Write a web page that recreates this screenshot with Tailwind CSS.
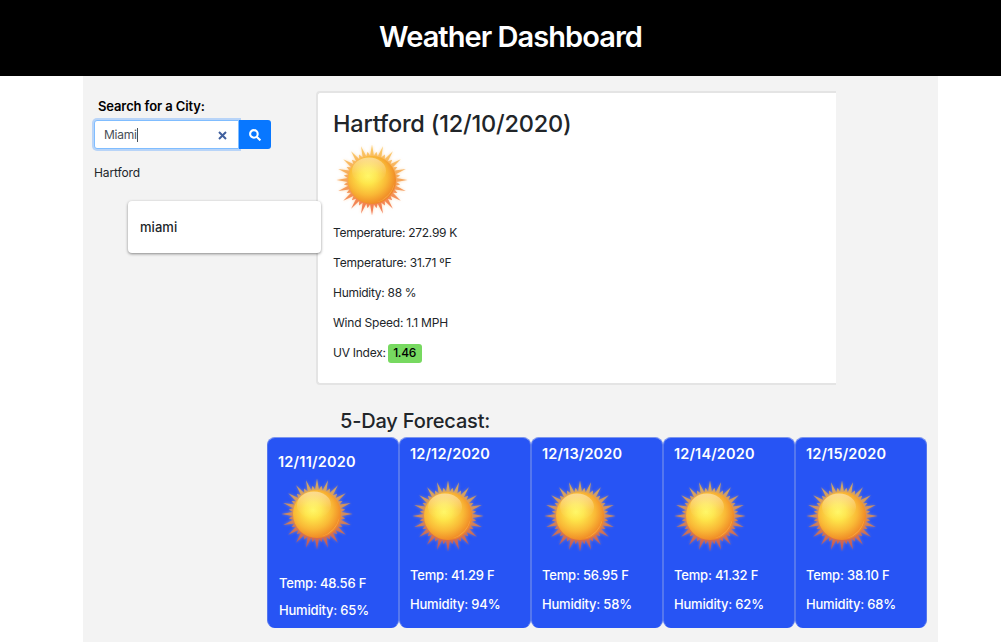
<!DOCTYPE html>
<html lang="en">
<head>
<meta charset="utf-8">
<title>Weather Dashboard</title>
<script src="https://cdn.jsdelivr.net/npm/@tailwindcss/browser@4"></script>
</head>
<body class="h-[642px] overflow-hidden bg-white font-['Inter',sans-serif] text-[12px] tracking-[-0.26px] text-[#212529]">
<svg class="absolute size-0" aria-hidden="true">
  <defs>
    <linearGradient id="rayFill" gradientUnits="userSpaceOnUse" x1="0" y1="-34" x2="0" y2="34">
      <stop offset="0" stop-color="#fbc040"/><stop offset=".5" stop-color="#f3923a"/><stop offset="1" stop-color="#ee5028"/>
    </linearGradient>
    <radialGradient id="disc" gradientUnits="userSpaceOnUse" cx="-4" cy="-4" r="32">
      <stop offset="0" stop-color="#fff65e"/><stop offset=".25" stop-color="#fee64a"/><stop offset=".6" stop-color="#f9b936"/><stop offset=".88" stop-color="#f08a26"/><stop offset="1" stop-color="#ee8228"/>
    </radialGradient>
    <linearGradient id="gloss" x1="0" y1="0" x2="0" y2="1">
      <stop offset="0" stop-color="#fff" stop-opacity=".45"/><stop offset=".6" stop-color="#fff" stop-opacity=".08"/><stop offset="1" stop-color="#fff" stop-opacity="0"/>
    </linearGradient>
    <filter id="glow" x="-20%" y="-20%" width="140%" height="140%"><feGaussianBlur stdDeviation="1.5"/></filter>
    <symbol id="sun" viewBox="-38 -38 76 76">
      <path class="rays" fill="#f8b257" opacity=".5" filter="url(#glow)"/>
      <path class="rays" fill="url(#rayFill)" opacity=".75"/>
      <circle r="24" fill="url(#disc)"/>
      <path d="M4 22.500A23 23 0 0 0 22.500 3 28 28 0 0 1 4 22.500Z" fill="#ffc069" opacity=".45"/>
      <ellipse cx="-3" cy="-9" rx="17" ry="13.500" fill="url(#gloss)"/>
    </symbol>
  </defs>
</svg>
<script>
  const points = [];
  for (let i = 0; i < 80; i++) {
    const radius = i % 4 === 0 ? 35.5 : i % 4 === 2 ? 28.5 : 24.5;
    const angle = (i * 4.5 - 90) * Math.PI / 180;
    points.push((radius * Math.cos(angle)).toFixed(2) + ' ' + (radius * Math.sin(angle)).toFixed(2));
  }
  document.querySelectorAll('.rays').forEach(p => p.setAttribute('d', 'M' + points.join('L') + 'Z'));
</script>
<header class="h-[76px] bg-black pt-[15px] pl-5 text-center text-white">
  <h1 class="text-[29px] leading-[43px] font-semibold tracking-[-0.95px]">Weather Dashboard</h1>
</header>
<main class="ml-[83px] h-[566px] w-[855px] bg-[#f3f3f3] pt-4">
  <div class="flex">
    <aside class="w-[233px] pl-[11px]">
      <label for="city" class="mt-1 block pl-1 text-[13px] leading-5 font-semibold tracking-[-0.12px] text-black">Search for a City:</label>
      <div class="mt-1 flex h-[29px]">
        <div id="city" class="flex w-[145px] items-center justify-between rounded-l-[3px] border border-[#80bdff] bg-white pr-[11px] pl-[9px] text-[#495057] shadow-[0_0_0_2px_#b8d4f8]">
          <span class="border-r border-[#495057] leading-[14px]">Miami</span>
          <svg class="mt-0.5 size-[9px]" viewBox="0 0 9 9" stroke="#41609e" stroke-width="2"><path d="M1 1 8 8M8 1 1 8"/></svg>
        </div>
        <button class="flex w-[31.500px] items-center justify-center rounded-r-[3px] bg-[#0877ff]" aria-label="Search">
          <svg class="size-3" viewBox="0 0 12 12" fill="none" stroke="#fff" stroke-width="2.100"><circle cx="4.900" cy="4.900" r="3.800"/><path d="m7.700 7.700 3.700 3.700"/></svg>
        </button>
      </div>
      <p class="mt-3.5 leading-5 tracking-[-0.12px]">Hartford</p>
    </aside>
    <section class="-mt-px h-[294px] w-[520px] rounded-l-[4px] border-2 border-r-0 border-[#e4e4e4] bg-white pl-[15px]">
      <h2 class="mt-[15px] text-[23.500px] leading-[32px] font-medium tracking-[-0.21px]">Hartford (12/10/2020)</h2>
      <svg class="mt-[2px] ml-px size-[76px]"><use href="#sun"/></svg>
      <div class="mt-[5px] flex flex-col gap-2.5 leading-5">
        <p class="tracking-[-0.29px]">Temperature: 272.99 K</p>
        <p class="tracking-[-0.18px]">Temperature: 31.71 ºF</p>
        <p class="tracking-[-0.29px]">Humidity: 88 %</p>
        <p class="tracking-[-0.2px]">Wind Speed: 1.1 MPH</p>
        <p class="flex items-center">UV Index:<b class="ml-[2px] h-[19px] w-[34px] rounded-[3px] bg-[#77d960] text-center leading-[18px] font-medium text-black">1.46</b></p>
      </div>
    </section>
  </div>
  <h3 class="mt-[21px] ml-[257px] text-[20px] leading-[31px] font-medium tracking-[-0.18px]">5-Day Forecast:</h3>
  <div class="ml-[184px] flex text-[13px] leading-5 font-medium tracking-[-0.19px] text-white">
    <article class="h-[191px] w-[132px] rounded-[8px] border border-[#5577ee] border-t-[#7d96ee] border-b-[#2754f4] bg-[#2754f4] pt-[14px] pl-2.5">
      <h4 class="text-[14.500px] font-semibold tracking-[0.22px]">12/11/2020</h4>
      <svg class="mt-1 ml-px size-[76px]"><use href="#sun"/></svg>
      <p class="mt-[21px] ml-px">Temp: 48.56 F</p><p class="mt-[7px] ml-px">Humidity: 65%</p>
    </article>
    <article class="h-[191px] w-[132px] rounded-[8px] border border-[#5577ee] border-t-[#7d96ee] border-b-[#2754f4] bg-[#2754f4] pt-1.5 pl-2.5">
      <h4 class="text-[14.500px] font-semibold tracking-[0.15px]">12/12/2020</h4>
      <svg class="mt-[14px] size-[76px]"><use href="#sun"/></svg>
      <p class="mt-[11px]">Temp: 41.29 F</p><p class="mt-[9px]">Humidity: 94%</p>
    </article>
    <article class="h-[191px] w-[132px] rounded-[8px] border border-[#5577ee] border-t-[#7d96ee] border-b-[#2754f4] bg-[#2754f4] pt-1.5 pl-2.5">
      <h4 class="text-[14.500px] font-semibold tracking-[0.15px]">12/13/2020</h4>
      <svg class="mt-[14px] size-[76px]"><use href="#sun"/></svg>
      <p class="mt-[11px]">Temp: 56.95 F</p><p class="mt-[9px]">Humidity: 58%</p>
    </article>
    <article class="h-[191px] w-[132px] rounded-[8px] border border-[#5577ee] border-t-[#7d96ee] border-b-[#2754f4] bg-[#2754f4] pt-1.5 pl-2.5">
      <h4 class="text-[14.500px] font-semibold tracking-[0.15px]">12/14/2020</h4>
      <svg class="mt-[14px] -ml-0.5 size-[76px]"><use href="#sun"/></svg>
      <p class="mt-[11px]">Temp: 41.32 F</p><p class="mt-[9px]">Humidity: 62%</p>
    </article>
    <article class="h-[191px] w-[132px] rounded-[8px] border border-[#5577ee] border-t-[#7d96ee] border-b-[#2754f4] bg-[#2754f4] pt-1.5 pl-2.5">
      <h4 class="text-[14.500px] font-semibold tracking-[0.15px]">12/15/2020</h4>
      <svg class="mt-[14px] -ml-0.5 size-[76px]"><use href="#sun"/></svg>
      <p class="mt-[11px]">Temp: 38.10 F</p><p class="mt-[9px]">Humidity: 68%</p>
    </article>
  </div>
</main>
<div class="absolute top-[201px] left-[128px] flex h-[52px] w-[193px] items-center rounded-[4px] bg-white pt-0.5 pl-3 text-[13px] font-medium tracking-[0.05px] shadow-[0_1px_3px_rgba(0,0,0,0.45)]">miami</div>
</body>
</html>
